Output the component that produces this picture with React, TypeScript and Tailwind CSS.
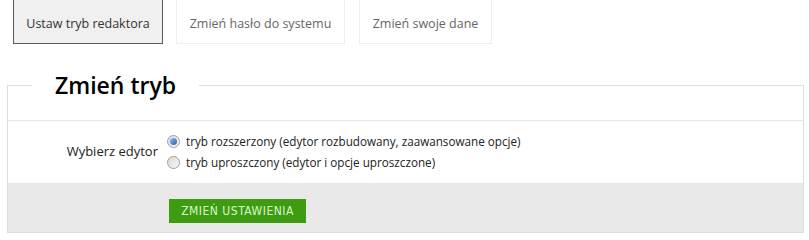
import React from "react";

function Radio({ checked }: { checked?: boolean }) {
  return (
    <span className="inline-flex w-[13px] h-[13px] rounded-full border border-[#a0a0a0] bg-gradient-to-br from-[#d8d8d8] to-[#f8f8f8] items-center justify-center shrink-0">
      {checked ? (
        <span className="w-[7px] h-[7px] rounded-full bg-gradient-to-br from-[#8fc4f0] to-[#1a5fa8]" />
      ) : null}
    </span>
  );
}

export default function App() {
  return (
    <div className="w-[809px] h-[240px] bg-white overflow-hidden" style={{ fontFamily: '"Open Sans", sans-serif' }}>
      <div className="flex pl-[13px] h-[44px]">
        <div className="w-[150px] h-[44px] border border-t-0 border-[#5a5a5a] bg-[#f0f0f0] flex items-center justify-center pt-[5px] text-[12.5px] text-[#333]">
          Ustaw tryb redaktora
        </div>
        <div className="ml-[13px] w-[169px] h-[44px] border border-t-0 border-[#eeeeee] bg-white flex items-center justify-center pt-[5px] text-[12.5px] text-[#666]">
          Zmień hasło do systemu
        </div>
        <div className="ml-[14px] w-[133px] h-[44px] border border-t-0 border-[#eeeeee] bg-white flex items-center justify-center pt-[5px] text-[12.5px] text-[#666]">
          Zmień swoje dane
        </div>
      </div>
      <fieldset className="ml-[7px] mt-[26px] w-[797px] border border-[#dddddd] p-0 m-0">
        <legend className="ml-[24px] px-[23px] text-[23px] leading-[30px] font-semibold text-black">
          Zmień tryb
        </legend>
        <div className="h-[21px] border-b border-[#e6e6e6]" />
        <div className="flex h-[62px] items-center">
          <div className="w-[150px] text-right text-[13px] text-[#222]">Wybierz edytor</div>
          <div className="ml-[9px] flex flex-col gap-[3px] text-[11.7px] text-[#222]">
            <label className="flex items-center gap-[6px]">
              <Radio checked />
              <span>tryb rozszerzony (edytor rozbudowany, zaawansowane opcje)</span>
            </label>
            <label className="flex items-center gap-[6px]">
              <Radio />
              <span>tryb uproszczony (edytor i opcje uproszczone)</span>
            </label>
          </div>
        </div>
        <div className="h-[49px] bg-[#e9e9e9] pl-[161px] pt-[14px]">
          <button className="w-[137px] h-[24px] bg-[#3d9c10] text-[#d8f5c8] text-[12px] tracking-[0.5px]" style={{ fontFamily: '"DejaVu Sans Condensed", "DejaVu Sans", sans-serif' }}>
            ZMIEŃ USTAWIENIA
          </button>
        </div>
      </fieldset>
    </div>
  );
}
